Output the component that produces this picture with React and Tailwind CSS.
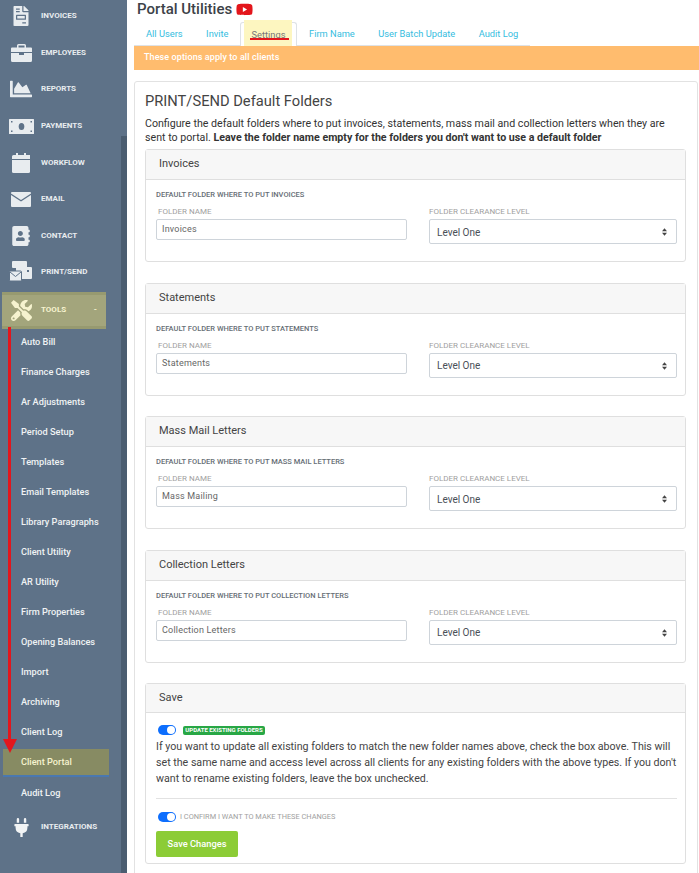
import React from "react";
import { FaFileInvoice, FaChartArea, FaTools, FaPlug, FaYoutube, FaAddressBook } from "react-icons/fa";

const L = "#e8ecef";
const D = "#5e7288";

const PrintIcon = () => (
  <svg width="25" height="22" viewBox="0 0 25 22" fill={L}>
    <rect x="3" y="0" width="15" height="7" rx="1" />
    <rect x="7" y="6" width="16" height="12" rx="1" />
    <rect x="0.5" y="10" width="12" height="10" rx="1" stroke={D} />
    <path d="M1 11l5.500 4.500L12 11" fill="none" stroke={D} />
    <rect x="18" y="9" width="2" height="2" fill={D} />
  </svg>
);
const ToolboxIcon = () => (
  <svg width="21" height="18" viewBox="0 0 21 18" fill={L}>
    <path d="M6 4V1.500A1.500 1.500 0 0 1 7.500 0h6A1.500 1.500 0 0 1 15 1.500V4h-1.500V1.500h-6V4z" />
    <path d="M1 3.500h19a1 1 0 0 1 1 1V8H0V4.500a1 1 0 0 1 1-1z" />
    <path d="M0 9h8v2h5V9h8v7.500a1.500 1.500 0 0 1-1.500 1.500h-18A1.500 1.500 0 0 1 0 16.500z" />
  </svg>
);
const MoneyIcon = () => (
  <svg width="25" height="15" viewBox="0 0 25 15">
    <rect width="25" height="15" rx="0.500" fill={L} />
    <ellipse cx="12.500" cy="7.500" rx="2.800" ry="3.500" fill={D} />
    <rect x="2" y="2" width="1.500" height="1.500" fill={D} />
    <rect x="21.500" y="2" width="1.500" height="1.500" fill={D} />
    <rect x="2" y="11.500" width="1.500" height="1.500" fill={D} />
    <rect x="21.500" y="11.500" width="1.500" height="1.500" fill={D} />
  </svg>
);
const CalIcon = () => (
  <svg width="18" height="20" viewBox="0 0 18 20" fill={L}>
    <rect x="4" y="0" width="2" height="4" />
    <rect x="12" y="0" width="2" height="4" />
    <path d="M1.500 2H18v4H0V3.500A1.500 1.500 0 0 1 1.500 2z" />
    <path d="M0 7h18v11.500a1.500 1.500 0 0 1-1.500 1.500h-15A1.500 1.500 0 0 1 0 18.500z" />
  </svg>
);
const MailIcon = () => (
  <svg width="20" height="15" viewBox="0 0 20 15" fill={L}>
    <path d="M1 0h18a1 1 0 0 1 1 1v.500L10 8 0 1.500V1a1 1 0 0 1 1-1z" />
    <path d="M0 3l10 6.500L20 3v11a1 1 0 0 1-1 1H1a1 1 0 0 1-1-1z" />
  </svg>
);

const mainTop = [
  ["INVOICES", <FaFileInvoice className="text-[#e8ecef] text-[20px]" />],
  ["EMPLOYEES", <ToolboxIcon />],
  ["REPORTS", <FaChartArea className="text-[#e8ecef] text-[22px]" />],
  ["PAYMENTS", <MoneyIcon />],
  ["WORKFLOW", <CalIcon />],
  ["EMAIL", <MailIcon />],
  ["CONTACT", <FaAddressBook className="text-[#e8ecef] text-[20px]" />],
  ["PRINT/SEND", <PrintIcon />],
];

const subs = ["Auto Bill", "Finance Charges", "Ar Adjustments", "Period Setup", "Templates", "Email Templates", "Library Paragraphs", "Client Utility", "AR Utility", "Firm Properties", "Opening Balances", "Import", "Archiving", "Client Log"];

function NavRow({ label, icon }) {
  return (
    <div className="h-[36.6px] flex items-center">
      <div className="w-[41px] flex justify-center pl-[1px] shrink-0">{icon}</div>
      <span className="text-[8px] font-bold text-[#e8ecef]">{label}</span>
    </div>
  );
}

function Sidebar() {
  return (
    <aside className="relative w-[127px] shrink-0 h-[873px] bg-[#5e7288] overflow-hidden">
      <div className="absolute right-0 top-[136px] bottom-0 w-[6px] bg-[#4b5d70]" />
      <div className="-mt-[2px]">
        {mainTop.map(([l, i]) => <NavRow key={l} label={l} icon={i} />)}
        <div className="mt-[1px] ml-[2px] w-[104px] h-[37px] bg-[#a3a57c] border-y-[3px] border-[#979a70] flex items-center">
          <div className="w-[39px] flex justify-center shrink-0"><FaTools className="text-[#f6f3cf] text-[21px]" /></div>
          <span className="text-[8px] font-bold text-[#f6f3cf]">TOOLS</span>
          <span className="ml-auto mr-[9px] text-[8px] font-bold text-[#f6f3cf] leading-none">-</span>
        </div>
        <div className="mt-[-2px]">
          {subs.map((s) => (
            <div key={s} className="h-[30px] flex items-center pl-[21px] text-[9.200px] font-medium text-[#f0f2f4]">{s}</div>
          ))}
        </div>
        <div className="mt-[2px] ml-[3px] w-[106px] h-[28px] bg-[#878b63] border-b-[2px] border-[#4a78b0] flex items-center pl-[18px] text-[9.200px] font-medium text-[#f6f3cf]">Client Portal</div>
        <div className="h-[33px] flex items-center pl-[21px] text-[9.200px] font-medium text-[#f0f2f4]">Audit Log</div>
        <div className="-mt-[1px]">
          <NavRow label="INTEGRATIONS" icon={<FaPlug className="text-[#f2f4f5] text-[19px]" />} />
        </div>
      </div>
      <div className="absolute left-[8px] top-[327px] w-[3px] h-[413px] bg-[#e3161c]" />
      <svg className="absolute left-[3px] top-[739px]" width="14" height="14" viewBox="0 0 14 14"><path d="M0 0h14L7 14z" fill="#e3161c" /></svg>
    </aside>
  );
}

function Panel({ title, heading, value }) {
  return (
    <section className="border border-[#dfdfdf] rounded-[3px] bg-white h-[113px]">
      <div className="h-[30px] bg-[#f7f7f7] border-b border-[#dfdfdf] flex items-center pl-[13px] text-[11px] text-[#444]">{title}</div>
      <div className="pl-[10px] pr-[8px] pt-[10px]">
        <div className="text-[7.500px] leading-[10px] font-medium text-[#666e75]">{heading}</div>
        <div className="flex gap-[22px] mt-[7px]">
          <div className="w-[251px] shrink-0">
            <div className="pl-[2px] text-[8px] leading-[10px] text-[#a0a0a0]">FOLDER NAME</div>
            <div className="mt-[2px] h-[21px] border border-[#ced4da] rounded-[2px] pl-[5px] pt-[1px] flex items-center text-[9px] text-[#666] tracking-[0.2px]">{value}</div>
          </div>
          <div className="w-[248px] shrink-0">
            <div className="text-[8px] leading-[10px] text-[#a0a0a0]">FOLDER CLEARANCE LEVEL</div>
            <div className="mt-[2px] h-[25px] border border-[#ced4da] rounded-[2px] pl-[7px] pr-[9px] pt-[1px] flex items-center justify-between text-[10px] text-[#495057]">
              <span>Level One</span>
              <svg width="5" height="8" viewBox="0 0 6 9" fill="#444"><path d="M3 0l3 3.500H0zM3 9L0 5.500h6z" /></svg>
            </div>
          </div>
        </div>
      </div>
    </section>
  );
}

const Toggle = () => (
  <span className="w-[18px] h-[10px] rounded-full bg-[#0d6efd] flex items-center justify-end pr-[1px] shrink-0">
    <span className="w-[8px] h-[8px] rounded-full bg-white" />
  </span>
);

const tabs = ["All Users", "Invite", "Settings", "Firm Name", "User Batch Update", "Audit Log"];

export default function App() {
  return (
    <div className="flex w-[699px] h-[873px] overflow-hidden bg-white" style={{ fontFamily: "Roboto, sans-serif" }}>
      <Sidebar />
      <main className="ml-[7px] w-[565px] shrink-0">
        <div className="h-[17px] pt-[1px] pl-[3px] flex items-center gap-[4px]">
          <h1 className="text-[15px] font-medium text-[#3c4248] leading-none whitespace-nowrap">Portal Utilities</h1>
          <FaYoutube className="text-[#e3161c] text-[17px]" />
        </div>
        <nav className="relative mt-[5px] h-[24px] w-[396px] pl-[12px] flex border-b border-[#dee2e6] text-[9.300px] text-[#35bde0] whitespace-nowrap">
          {tabs.map((t) =>
            t === "Settings" ? (
              <div key={t} className="relative w-[57px] shrink-0 h-[24px] ml-[-12px] mr-[12px] border border-b-0 border-[#dee2e6] rounded-t-[3px] flex justify-center items-center text-[#777] bg-white">
                <span className="absolute left-[3px] top-[-3px] w-[48px] h-[26px] bg-[#fdf6c0]" />
                <span className="relative">{t}</span>
                <span className="absolute left-[9px] top-[15px] w-[39px] h-[2px] bg-[#e3161c]" />
              </div>
            ) : (
              <div key={t} className="mr-[23.500px] shrink-0 flex items-center">{t}</div>
            )
          )}
        </nav>
        <div className="h-[24px] bg-[#ffbc6e] flex items-center pl-[10px] text-[9px] font-medium text-white tracking-[0.1px]">These options apply to all clients</div>
        <div className="mt-[11px] w-[564px] border border-[#e2e2e2] rounded-[3px] pl-[10px] pr-[11px] pt-[10px] h-[830px]">
          <h2 className="text-[14.700px] leading-[18px] text-[#444]">PRINT/SEND Default Folders</h2>
          <p className="mt-[7px] text-[10.650px] leading-[13.500px] text-[#333]">
            Configure the default folders where to put invoices, statements, mass mail and collection letters when they are sent to portal. <b className="font-bold">Leave the folder name empty for the folders you don't want to use a default folder</b>
          </p>
          <div className="mt-[5px] flex flex-col gap-[20.500px]">
            <Panel title="Invoices" heading="DEFAULT FOLDER WHERE TO PUT INVOICES" value="Invoices" />
            <Panel title="Statements" heading="DEFAULT FOLDER WHERE TO PUT STATEMENTS" value="Statements" />
            <Panel title="Mass Mail Letters" heading="DEFAULT FOLDER WHERE TO PUT MASS MAIL LETTERS" value="Mass Mailing" />
            <Panel title="Collection Letters" heading="DEFAULT FOLDER WHERE TO PUT COLLECTION LETTERS" value="Collection Letters" />
            <section className="border border-[#dfdfdf] rounded-[3px] h-[181px]">
              <div className="h-[29px] bg-[#f7f7f7] border-b border-[#dfdfdf] flex items-center pl-[13px] text-[11px] text-[#444]">Save</div>
              <div className="pl-[10px] pr-[8px] pt-[12px]">
                <div className="flex items-center pl-[2px] gap-[7px]">
                  <Toggle />
                  <span className="w-[82px] h-[9px] rounded-[2px] bg-[#28a745] flex items-center justify-center text-[6px] font-bold text-white leading-none whitespace-nowrap">UPDATE EXISTING FOLDERS</span>
                </div>
                <p className="mt-[4px] text-[10.650px] leading-[16px] text-[#444]">If you want to update all existing folders to match the new folder names above, check the box above. This will set the same name and access level across all clients for any existing folders with the above types. If you don't want to rename existing folders, leave the box unchecked.</p>
                <div className="mt-[11px] border-t border-[#e2e2e2]" />
                <div className="mt-[13px] flex items-center pl-[2px] gap-[4px]">
                  <Toggle />
                  <span className="text-[7.400px] leading-[10px] text-[#a0a0a0]">I CONFIRM I WANT TO MAKE THESE CHANGES</span>
                </div>
                <button className="mt-[9px] w-[82px] h-[26px] rounded-[2px] bg-[#8ccc36] text-[9.300px] font-medium text-white">Save Changes</button>
              </div>
            </section>
          </div>
        </div>
      </main>
    </div>
  );
}
